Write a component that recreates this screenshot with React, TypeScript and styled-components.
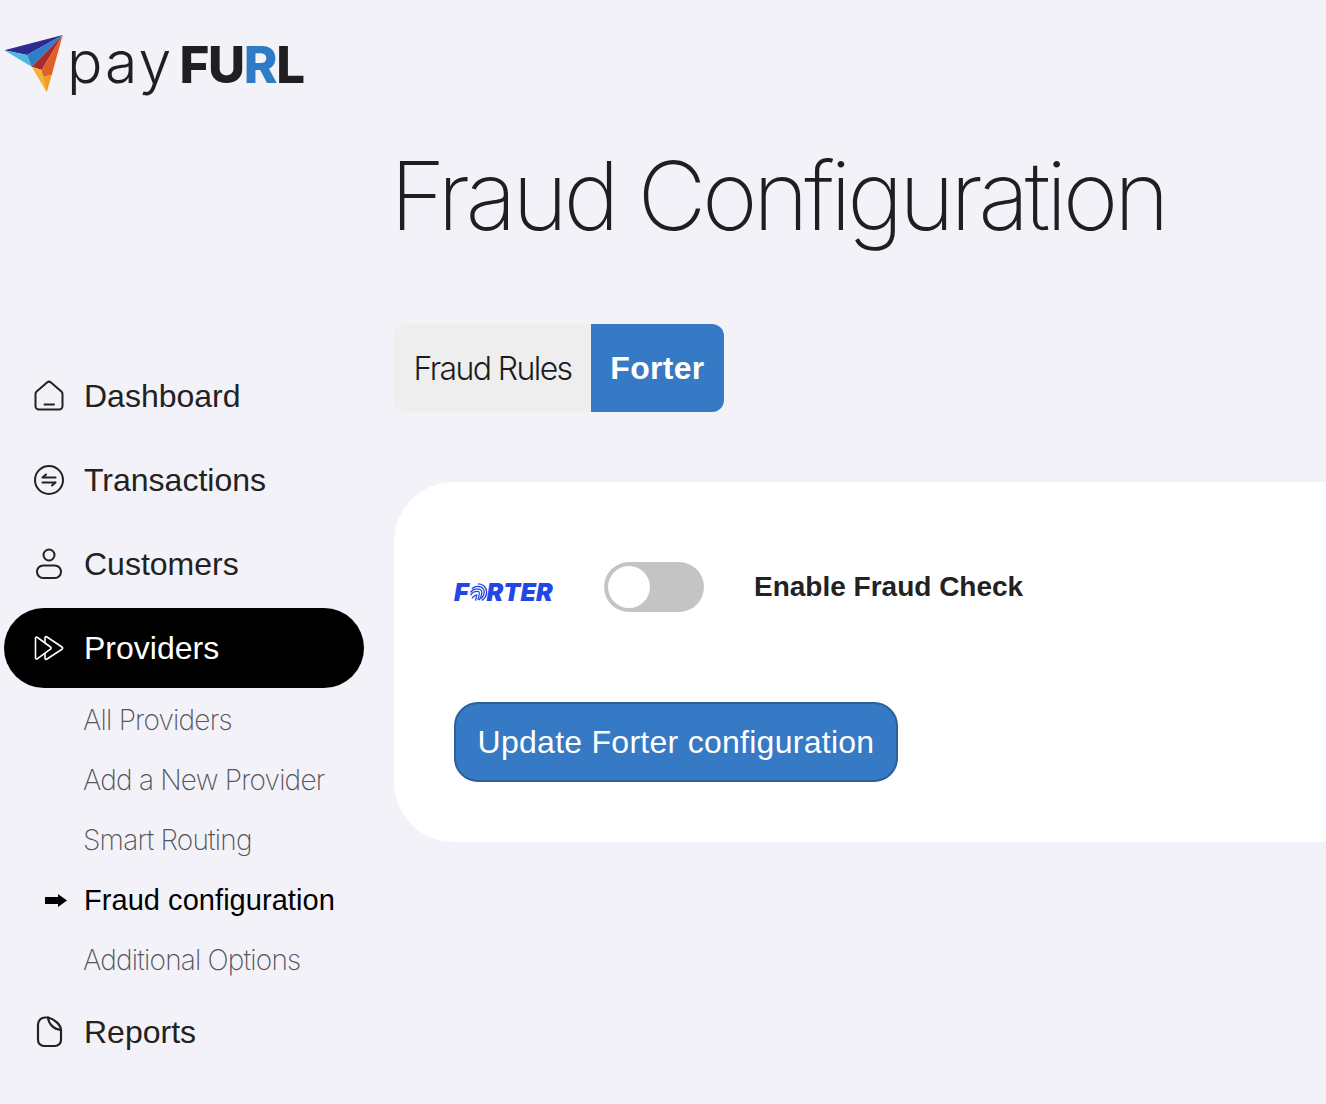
import React from "react";
import styled, { createGlobalStyle } from "styled-components";

const Global = createGlobalStyle`
  html, body { margin: 0; padding: 0; background: #f2f2f8; }
  body { font-family: "Liberation Sans", Arial, sans-serif; color: #222; overflow: hidden; }
`;

const Page = styled.div`
  display: flex;
  width: 1326px;
  height: 1104px;
  overflow: hidden;
  background: #f2f2f8;
`;

const Sidebar = styled.aside`
  width: 394px;
  flex: none;
  display: flex;
  flex-direction: column;
  padding-top: 34px;
  box-sizing: border-box;
`;

const LogoRow = styled.div`
  display: flex;
  align-items: flex-start;
  height: 320px;
  padding-left: 4px;
`;

const LogoText = styled.div`
  display: flex;
  align-items: baseline;
  margin-left: 3px;
  margin-top: -2px;
  height: 60px;
  line-height: 60px;
  color: #1f1e20;
`;

const LogoPay = styled.span`
  font-family: Inter, sans-serif;
  font-size: 59px;
  font-weight: 350;
  letter-spacing: 2px;
`;

const LogoFurl = styled.span`
  font-family: Inter, sans-serif;
  font-size: 51px;
  font-weight: 800;
  letter-spacing: -1.3px;
  margin-left: 6px;
`;

const LogoR = styled.span`
  color: #2f7cc6;
`;

const Nav = styled.nav`
  display: flex;
  flex-direction: column;
`;

const NavItem = styled.a<{ $active?: boolean }>`
  display: flex;
  align-items: center;
  width: 360px;
  height: 80px;
  margin: 2px 0 2px 4px;
  padding-left: 28px;
  box-sizing: border-box;
  gap: 18px;
  border-radius: 40px;
  font-size: 32px;
  color: ${(p) => (p.$active ? "#fff" : "#222")};
  background: ${(p) => (p.$active ? "#000" : "transparent")};
  svg { flex: none; display: block; }
`;

const SubList = styled.div`
  display: flex;
  flex-direction: column;
`;

const SubItem = styled.a<{ $current?: boolean }>`
  position: relative;
  display: flex;
  align-items: center;
  height: 60px;
  padding-left: ${(p) => (p.$current ? 84 : 83)}px;
  font-family: ${(p) => (p.$current ? '"Liberation Sans"' : "Inter")}, sans-serif;
  font-size: ${(p) => (p.$current ? 29 : 28)}px;
  font-weight: ${(p) => (p.$current ? 400 : 200)};
  letter-spacing: ${(p) => (p.$current ? 0.05 : -0.8)}px;
  color: ${(p) => (p.$current ? "#000" : "#55555a")};
`;

const CurrentMark = styled.svg`
  position: absolute;
  left: 45px;
  top: 24px;
`;

const Main = styled.main`
  flex: 1;
  min-width: 0;
  display: flex;
  flex-direction: column;
`;

const Title = styled.h1`
  margin: 136px 0 0 -4px;
  height: 122px;
  font-family: Inter, sans-serif;
  font-size: 95px;
  line-height: 120px;
  font-weight: 200;
  letter-spacing: -4.45px;
  color: #1f1f22;
  white-space: nowrap;
`;

const Tabs = styled.div`
  display: flex;
  align-self: flex-start;
  margin-top: 66px;
  height: 88px;
  border-radius: 12px;
  overflow: hidden;
`;

const Tab = styled.button<{ $active?: boolean }>`
  border: 0;
  height: 88px;
  width: ${(p) => (p.$active ? 133 : 197)}px;
  padding: 0;
  font-size: 32px;
  font-family: ${(p) => (p.$active ? '"Liberation Sans"' : "Inter")}, sans-serif;
  font-weight: ${(p) => (p.$active ? 700 : 300)};
  letter-spacing: ${(p) => (p.$active ? 0.3 : -1.6)}px;
  color: ${(p) => (p.$active ? "#fff" : "#1c1c1e")};
  background: ${(p) => (p.$active ? "#3679c4" : "#eeeeee")};
`;

const Card = styled.section`
  margin-top: 70px;
  height: 360px;
  box-sizing: border-box;
  padding: 80px 60px 60px;
  background: #fff;
  border-radius: 60px 0 0 60px;
`;

const Row = styled.div`
  display: flex;
  align-items: center;
  height: 50px;
`;

const ForterLogo = styled.div`
  display: flex;
  align-items: center;
  width: 150px;
  height: 50px;
  padding-top: 9px;
  box-sizing: border-box;
  font-family: Inter, sans-serif;
  font-style: italic;
  font-weight: 900;
  font-size: 25px;
  letter-spacing: 0;
  color: #2247e6;
  svg { margin: 0 -1px 0 0; }
`;

const Toggle = styled.div`
  position: relative;
  width: 100px;
  height: 50px;
  border-radius: 25px;
  background: #c4c4c4;
  flex: none;
`;

const Knob = styled.span`
  position: absolute;
  left: 4px;
  top: 4px;
  width: 42px;
  height: 42px;
  border-radius: 50%;
  background: #fff;
`;

const ToggleLabel = styled.label`
  margin-left: 50px;
  font-size: 28px;
  font-weight: 700;
  color: #222;
`;

const Submit = styled.button`
  display: block;
  margin-top: 90px;
  width: 444px;
  height: 80px;
  box-sizing: border-box;
  padding: 0;
  border: 2px solid #2e6099;
  border-radius: 24px;
  background: #3679c4;
  color: #fff;
  font-family: "Liberation Sans", sans-serif;
  font-size: 32px;
  letter-spacing: 0.27px;
`;

const stroke = { fill: "none", stroke: "currentColor", strokeWidth: 2, strokeLinecap: "round", strokeLinejoin: "round" } as const;

const HomeIcon = () => (
  <svg width="34" height="34" viewBox="0 0 34 34" {...stroke}>
    <path d="M15 3.500 4.600 12.500a3.500 3.500 0 0 0-1.100 2.600V27a3.500 3.500 0 0 0 3.500 3.500h20a3.500 3.500 0 0 0 3.500-3.500V15.100a3.500 3.500 0 0 0-1.100-2.600L19 3.500a3 3 0 0 0-4 0Z" />
    <path d="M12.500 25.500h9.500" />
  </svg>
);
const TxIcon = () => (
  <svg width="34" height="34" viewBox="0 0 34 34" {...stroke}>
    <circle cx="17" cy="17" r="14" />
    <path d="M10.500 14.500h13M10.500 14.500l3.500-3M23.500 19.500h-13M23.500 19.500l-3.500 3" />
  </svg>
);
const UserIcon = () => (
  <svg width="34" height="34" viewBox="0 0 34 34" {...stroke}>
    <circle cx="17" cy="8" r="5.500" />
    <rect x="5" y="18.500" width="24" height="12.500" rx="6.200" />
  </svg>
);
const ProvidersIcon = () => (
  <svg width="34" height="34" viewBox="0 0 34 34" {...stroke} strokeWidth="1.600">
    <path d="M3.500 7.500a1.200 1.200 0 0 1 2-1L18.500 16a1.300 1.300 0 0 1 0 2.200L5.500 27.700a1.200 1.200 0 0 1-2-1Z" />
    <path d="M13 11.500V7a1.200 1.200 0 0 1 2-1L30 16a1.300 1.300 0 0 1 0 2.200L15 28a1.200 1.200 0 0 1-2-1v-4.500" />
  </svg>
);
const ReportIcon = () => (
  <svg width="34" height="34" viewBox="0 0 34 34" {...stroke} strokeWidth="2.200">
    <path d="M16 2.500h-3a7 7 0 0 0-7 7V25a6 6 0 0 0 6 6h11a6 6 0 0 0 6-6V15C29 10.500 23 4 16 2.500Z" />
    <path d="M16 2.500c.5 6 5 11.500 13 12.500" />
  </svg>
);

const Mark = () => (
  <svg width="60" height="60" viewBox="4 34 60 60">
    <polygon points="4.300,50.300 62.700,35 27,55" fill="#2e2a90" />
    <polygon points="4.300,50.300 27,55 31.700,66.700" fill="#4cb9de" />
    <polygon points="27,55 62.700,35 31.700,66.700" fill="#2f7ec8" />
    <polygon points="31.700,66.700 62.700,35 41.700,70" fill="#a92b2f" />
    <polygon points="62.700,35 51.700,75 42.700,76.700 41.700,70" fill="#e0602a" />
    <polygon points="31.700,66.700 41.700,70 42.700,76.700 46.700,92.300" fill="#f6b233" />
    <polygon points="42.700,76.700 51.700,75 46.700,92.300" fill="#ef9a20" />
  </svg>
);

const Fingerprint = () => (
  <svg width="19" height="20" viewBox="0 0 20 20" fill="none" stroke="#2247e6" strokeWidth="1.400" strokeLinecap="round">
    <path d="M10 1.500a8.500 8.500 0 0 1 8.500 8.500c0 3.500-2 7-4.500 8.500" />
    <path d="M3.500 6A8 8 0 0 1 10 4.200 6 6 0 0 1 16 10c0 2.500-1 5-3 7" />
    <path d="M2 10a8 8 0 0 1 8-3 3.500 3.500 0 0 1 3.500 3.500c0 2.500-1 5-2.500 7.500" />
    <path d="M2 13a8 8 0 0 1 8-3.500c1.500.5 1 3.500-.5 8.500" />
    <path d="M3.500 16c2-2 4-3 4.500-3s-.5 3-1 5.500" />
  </svg>
);

export default function App() {
  return (
    <Page>
      <Global />
      <Sidebar>
        <LogoRow>
          <Mark />
          <LogoText>
            <LogoPay>pay</LogoPay>
            <LogoFurl>
              FU<LogoR>R</LogoR>L
            </LogoFurl>
          </LogoText>
        </LogoRow>
        <Nav>
          <NavItem><HomeIcon />Dashboard</NavItem>
          <NavItem><TxIcon />Transactions</NavItem>
          <NavItem><UserIcon />Customers</NavItem>
          <NavItem $active><ProvidersIcon />Providers</NavItem>
          <SubList>
            <SubItem>All Providers</SubItem>
            <SubItem>Add a New Provider</SubItem>
            <SubItem>Smart Routing</SubItem>
            <SubItem $current>
              <CurrentMark width="22" height="13" viewBox="0 0 22 13" aria-hidden="true">
                <polygon points="0,3 13,3 13,0 22,6.500 13,13 13,10 0,10" fill="#000" />
              </CurrentMark>
              Fraud configuration
            </SubItem>
            <SubItem>Additional Options</SubItem>
          </SubList>
          <NavItem><ReportIcon />Reports</NavItem>
        </Nav>
      </Sidebar>
      <Main>
        <Title>Fraud Configuration</Title>
        <Tabs>
          <Tab>Fraud Rules</Tab>
          <Tab $active>Forter</Tab>
        </Tabs>
        <Card>
          <Row>
            <ForterLogo>F<Fingerprint />RTER</ForterLogo>
            <Toggle><Knob /></Toggle>
            <ToggleLabel>Enable Fraud Check</ToggleLabel>
          </Row>
          <Submit>Update Forter configuration</Submit>
        </Card>
      </Main>
    </Page>
  );
}
